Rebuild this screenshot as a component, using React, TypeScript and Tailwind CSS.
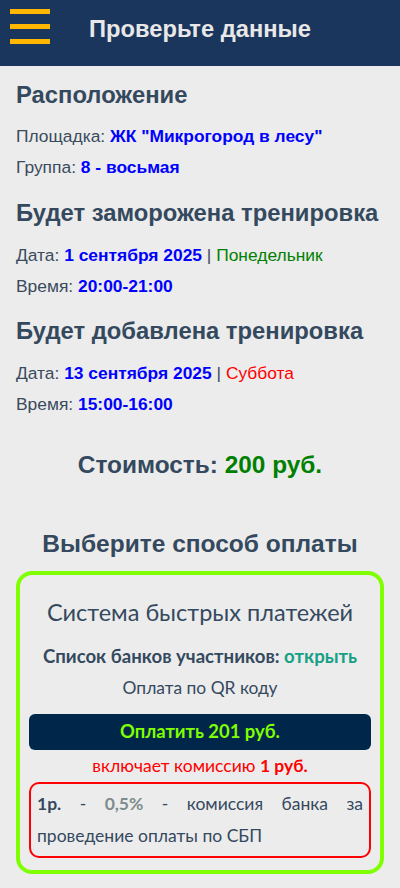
import type { ReactNode } from 'react';

const arial = { fontFamily: '"Liberation Sans", Arial, sans-serif' };
const lato = { fontFamily: 'Lato, "Liberation Sans", sans-serif' };

function Hamburger() {
  return (
    <button className="flex h-[35px] w-[40px] flex-col justify-between" aria-label="menu">
      <span className="block h-[5px] w-full bg-[#ffb600]" />
      <span className="block h-[5px] w-full bg-[#ffb600]" />
      <span className="block h-[5px] w-full bg-[#ffb600]" />
    </button>
  );
}

function Heading({ children, className = '' }: { children: ReactNode; className?: string }) {
  return <h2 className={`text-[23.8px] leading-[28px] font-bold text-[#34495e] ${className}`}>{children}</h2>;
}

function Row({ label, children }: { label: string; children: ReactNode }) {
  return (
    <p className="text-[17.4px] leading-[31px] text-[#3a4b5c]">
      {label}: {children}
    </p>
  );
}

function Value({ children }: { children: ReactNode }) {
  return <span className="font-bold text-[#0000ff]">{children}</span>;
}

export default function App() {
  return (
    <div className="min-h-[888px] w-[400px] bg-[#ececec]" style={arial}>
      <header className="relative flex h-[66px] items-start bg-[#1b365d] px-[10px] pt-[9px]">
        <Hamburger />
        <h1 className="pointer-events-none absolute inset-x-0 top-[14px] text-center text-[23.7px] leading-[30px] font-bold text-[#e8e8e8]">
          Проверьте данные
        </h1>
      </header>

      <main className="px-4 pt-[15px]">
        <section>
          <Heading className="mb-[12px]">Расположение</Heading>
          <Row label="Площадка">
            <Value>ЖК "Микрогород в лесу"</Value>
          </Row>
          <Row label="Группа">
            <Value>8 - восьмая</Value>
          </Row>
        </section>

        <section className="mt-[16px]">
          <Heading className="mb-[13px]">Будет заморожена тренировка</Heading>
          <Row label="Дата">
            <Value>1 сентября 2025</Value> | <span className="text-[#008000]">Понедельник</span>
          </Row>
          <Row label="Время">
            <Value>20:00-21:00</Value>
          </Row>
        </section>

        <section className="mt-[15px]">
          <Heading className="mb-[13px]">Будет добавлена тренировка</Heading>
          <Row label="Дата">
            <Value>13 сентября 2025</Value> | <span className="text-[#ff0000]">Суббота</span>
          </Row>
          <Row label="Время">
            <Value>15:00-16:00</Value>
          </Row>
        </section>

        <p className="mt-[31px] text-center text-[24.4px] leading-[28px] font-bold text-[#34495e]">
          Стоимость: <span className="text-[#008000]">200 руб.</span>
        </p>

        <h2 className="mt-[50px] text-center text-[24.5px] leading-[30px] font-bold text-[#34495e]">
          Выберите способ оплаты
        </h2>
      </main>

      {/* СБП payment option */}
      <div
        className="mx-4 mt-[12px] rounded-[16px] border-4 border-[#7fff00] px-[9px] pt-[22px] pb-[12px] text-center text-[#34495e]"
        style={lato}
      >
        <h3 className="text-[23.5px] leading-[30px]">Система быстрых платежей</h3>
        <p className="mt-[17px] text-[18.6px] leading-[24px] font-bold">
          Список банков участников: <span className="text-[#16a085]">открыть</span>
        </p>
        <p className="mt-[8px] text-[17.4px] leading-[24px]">Оплата по QR коду</p>
        <button className="mt-[14px] h-[36px] w-full rounded-[6px] bg-[#00264a] text-[18.4px] font-bold text-[#7fff00]">
          Оплатить 201 руб.
        </button>
        <p className="mt-[6px] text-[17.5px] leading-[20px] text-[#ff0000]">
          включает комиссию <b>1 руб.</b>
        </p>
        <div className="mt-[6px] rounded-[10px] border-2 border-[#ff0000] px-[6px] py-[4px] text-justify text-[17.5px] leading-[32px]">
          <b>1р.</b> - <b className="text-[#7f8c8d]">0,5%</b> - комиссия банка за проведение оплаты по СБП
        </div>
      </div>
    </div>
  );
}
